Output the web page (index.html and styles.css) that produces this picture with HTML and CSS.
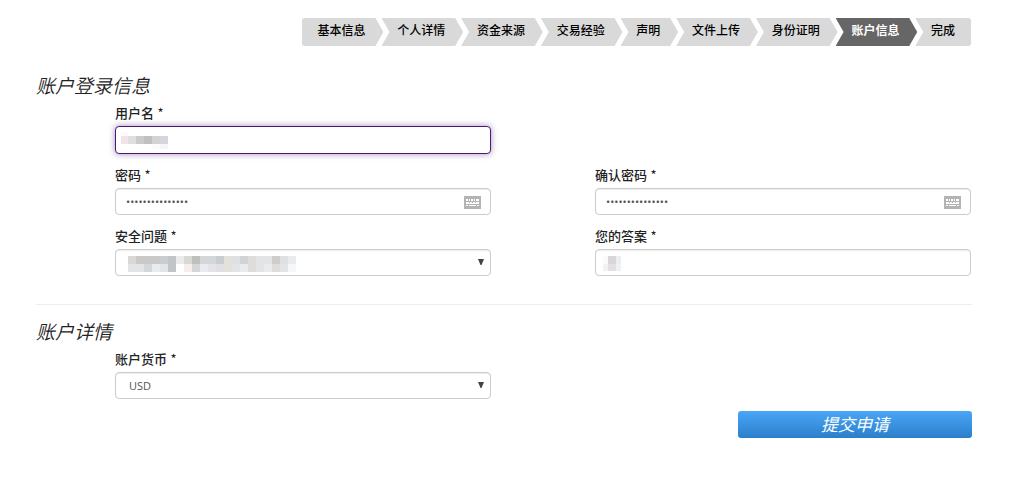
FILE: index.html
```html
<!DOCTYPE html>
<html lang="zh-CN">
<head>
<meta charset="utf-8">
<title>账户信息</title>
<link rel="stylesheet" href="styles.css">
</head>
<body>
<main class="page">
  <nav aria-label="申请步骤">
    <ol class="steps">
      <li class="step">基本信息</li>
      <li class="step">个人详情</li>
      <li class="step">资金来源</li>
      <li class="step">交易经验</li>
      <li class="step">声明</li>
      <li class="step">文件上传</li>
      <li class="step">身份证明</li>
      <li class="step step-active" aria-current="step">账户信息</li>
      <li class="step">完成</li>
    </ol>
  </nav>

  <form class="form">
    <section class="section">
      <h2 class="heading">账户登录信息</h2>
      <div class="grid">
        <div class="field field-first">
          <label class="label" for="username">用户名 <span class="star">*</span></label>
          <div class="control">
            <input class="input input-focus" id="username" type="text">
            <svg class="mask mask-user" width="47" height="24" viewBox="0 0 47 24" aria-hidden="true" shape-rendering="crispEdges">
              <path fill="#fdf8f9" d="M0 4h7v4H0z"/><path fill="#f0e4ea" d="M0 8h7v8H0z"/><path fill="#dee0df" d="M7 8h8v8H7z"/><path fill="#cbcacc" d="M15 8h8v8h-8z"/><path fill="#c0bfc1" d="M23 8h8v8h-8z"/><path fill="#d2d3d2" d="M31 8h8v8h-8z"/><path fill="#d6d5dc" d="M39 8h8v8h-8z"/><path fill="#fefcfa" d="M31 16h8v5h-8z"/><path fill="#f5f6fa" d="M39 16h8v5h-8z"/>
            </svg>
          </div>
        </div>
        <div class="field field-first">
          <label class="label" for="password">密码 <span class="star">*</span></label>
          <div class="control">
            <input class="input input-password" id="password" type="password" value="abcdefghijklmno">
            <svg class="keyboard" width="17" height="13" viewBox="0 0 17 13" aria-hidden="true"><path fill="#b4b4b4" d="M0 0h17v13H0z"/><path fill="#fff" d="M2 3h2v2H2zM5 3h1v2H5zM7 3h2v2H7zM10 3h1v2h-1zM12 3h3v2h-3zM2 6h3v1H2zM6 6h2v1H6zM9 6h2v1H9zM12 6h3v1h-3zM2 7h13v1H2zM2 9h2v1H2zM5 9h7v1H5zM13 9h2v1h-2z"/></svg>
          </div>
        </div>
        <div class="field">
          <label class="label" for="confirm">确认密码 <span class="star">*</span></label>
          <div class="control">
            <input class="input input-password" id="confirm" type="password" value="abcdefghijklmno">
            <svg class="keyboard" width="17" height="13" viewBox="0 0 17 13" aria-hidden="true"><path fill="#b4b4b4" d="M0 0h17v13H0z"/><path fill="#fff" d="M2 3h2v2H2zM5 3h1v2H5zM7 3h2v2H7zM10 3h1v2h-1zM12 3h3v2h-3zM2 6h3v1H2zM6 6h2v1H6zM9 6h2v1H9zM12 6h3v1h-3zM2 7h13v1H2zM2 9h2v1H2zM5 9h7v1H5zM13 9h2v1h-2z"/></svg>
          </div>
        </div>
        <div class="field">
          <label class="label" for="question">安全问题 <span class="star">*</span></label>
          <div class="control">
            <select class="input" id="question"><option></option></select>
            <svg class="arrow" width="6" height="6" viewBox="0 0 6 6" aria-hidden="true"><path fill="#444" d="M0 0h6L3.5 6h-1z"/></svg>
            <svg class="mask mask-question" width="168" height="16" viewBox="0 0 21 2" aria-hidden="true" shape-rendering="crispEdges">
              <path fill="#d9d8d4" d="M0 0h1v1H0z"/><path fill="#cac9c9" d="M1 0h3v1H1z"/><path fill="#c8cdd2" d="M4 0h1v1H4zM11 0h1v1h-1z"/><path fill="#c2c5c6" d="M5 0h1v2H5z"/><path fill="#ebebeb" d="M6 0h1v1H6z"/><path fill="#dad8d7" d="M7 0h1v1H7z"/><path fill="#bdc0bd" d="M8 0h1v1H8z"/><path fill="#d4d6da" d="M9 0h2v1H9zM2 1h1v1H2zM8 1h1v1H8z"/><path fill="#e4e1dc" d="M12 0h1v2h-1z"/><path fill="#dde1e3" d="M13 0h1v1h-1zM19 0h1v1h-1z"/><path fill="#d3d3d4" d="M14 0h1v1h-1z"/><path fill="#dfdddc" d="M15 0h1v2h-1zM18 1h1v1h-1z"/><path fill="#e3e4e6" d="M16 0h2v1h-2zM0 1h2v1H0zM4 1h1v1H4zM10 1h1v1h-1zM13 1h1v1h-1zM16 1h1v1h-1zM19 1h1v1h-1z"/><path fill="#d0ccc7" d="M18 0h1v1h-1z"/><path fill="#e9ecee" d="M20 0h1v1h-1zM3 1h1v1H3zM9 1h1v1H9zM14 1h1v1h-1zM17 1h1v1h-1z"/><path fill="#e0dfe3" d="M11 1h1v1h-1z"/><path fill="#f6eeec" d="M7 1h1v1H7z"/><path fill="#f7f7f7" d="M20 1h1v1h-1z"/>
            </svg>
          </div>
        </div>
        <div class="field">
          <label class="label" for="answer">您的答案 <span class="star">*</span></label>
          <div class="control">
            <input class="input" id="answer" type="text">
            <svg class="mask mask-answer" width="18" height="15" viewBox="0 0 18 15" aria-hidden="true" shape-rendering="crispEdges"><path fill="#fbf9fa" d="M0 0h5v8H0z"/><path fill="#dad6d7" d="M5 0h8v8H5z"/><path fill="#ebedf3" d="M13 0h5v8h-5z"/><path fill="#f5f2ee" d="M0 8h5v7H0z"/><path fill="#e1e1e4" d="M5 8h8v7H5z"/><path fill="#f1f1f4" d="M13 8h5v7h-5z"/></svg>
          </div>
        </div>
      </div>
    </section>

    <section class="section section-details">
      <h2 class="heading">账户详情</h2>
      <div class="grid">
        <div class="field field-first">
          <label class="label" for="currency">账户货币 <span class="star">*</span></label>
          <div class="control">
            <select class="input" id="currency"><option>USD</option></select>
            <svg class="arrow" width="6" height="6" viewBox="0 0 6 6" aria-hidden="true"><path fill="#444" d="M0 0h6L3.5 6h-1z"/></svg>
          </div>
        </div>
      </div>
    </section>

    <button class="submit" type="button">提交申请</button>
  </form>
</main>
</body>
</html>
```
FILE: styles.css
```css
* {
  box-sizing: border-box;
}

body {
  margin: 0;
  background: #fff;
  color: #222;
  font-family: "Open Sans", "Noto Sans CJK SC", sans-serif;
  font-size: 13px;
}

.page {
  padding: 18px 56px 40px 36px;
}

.steps {
  display: flex;
  width: 71.5%;
  margin: 0 1px 0 auto;
  padding: 0;
  list-style: none;
}

.step {
  flex: 1 1 auto;
  height: 28px;
  margin-right: -2px;
  padding: 0 17px 0 15px;
  background: #d9d9d9;
  color: #000;
  font-size: 12px;
  font-weight: 500;
  line-height: 26px;
  text-align: center;
  white-space: nowrap;
  clip-path: polygon(0 0, calc(100% - 8px) 0, 100% 50%, calc(100% - 8px) 100%, 0 100%, 8px 50%);
}

.step:first-child {
  border-radius: 3px 0 0 3px;
  clip-path: polygon(0 0, calc(100% - 8px) 0, 100% 50%, calc(100% - 8px) 100%, 0 100%);
}

.step:last-child {
  margin-right: 0;
  padding-right: 15px;
  border-radius: 0 3px 3px 0;
  clip-path: polygon(0 0, 100% 0, 100% 100%, 0 100%, 8px 50%);
}

.step-active {
  background: #666;
  color: #fff;
  font-weight: 700;
}

.form {
  display: flex;
  flex-direction: column;
  padding-top: 28px;
}

.heading {
  margin: 0 0 5px;
  font-size: 19px;
  font-style: italic;
  font-weight: 350;
  line-height: 24px;
}

.grid {
  display: grid;
  grid-template-columns: 1fr 1fr;
  gap: 11px 104px;
  padding: 0 1px 0 79px;
}

.field-first {
  grid-column: 1;
}

.label {
  display: block;
  height: 20px;
  margin-bottom: 3px;
  font-weight: 500;
  line-height: 20px;
}

.star {
  font-family: "Noto Sans CJK SC", sans-serif;
  font-weight: 400;
}

.control {
  position: relative;
}

.input {
  display: block;
  width: 100%;
  height: 27px;
  margin: 0;
  padding: 0 13px;
  border: 1px solid #ccc;
  border-radius: 4px;
  outline: 0;
  background: #fff;
  box-shadow: inset 0 1px 1px #00000013;
  color: #555;
  font: 11px "Open Sans", sans-serif;
  appearance: none;
}

.input-password {
  padding: 0 10px;
}

.input-focus {
  height: 28px;
  border-color: #4b1873;
  box-shadow: 0 0 6px #4b187380;
}

.mask,
.keyboard,
.arrow {
  position: absolute;
  pointer-events: none;
}

.mask-user {
  top: 2px;
  left: 6px;
}

.mask-question {
  top: 7px;
  left: 13px;
}

.mask-answer {
  top: 7px;
  left: 8px;
}

.keyboard {
  top: 8px;
  right: 10px;
}

.arrow {
  top: 10px;
  right: 7px;
}

.section-details {
  margin-top: 28px;
  padding-top: 15px;
  border-top: 1px solid #eee;
}

.submit {
  align-self: flex-end;
  width: 25%;
  height: 27px;
  margin-top: 12px;
  padding: 0;
  border: 0;
  border-radius: 3px;
  background: linear-gradient(#4ba6f8, #2a7fca);
  color: #fff;
  font-family: "Open Sans", "Noto Sans CJK SC", sans-serif;
  font-size: 17px;
  font-style: italic;
  line-height: 26px;
}
```
